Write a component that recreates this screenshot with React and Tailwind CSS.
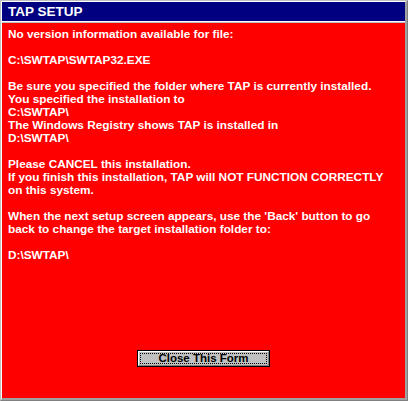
export default function App() {
  const lines = [
    "No version information available for file:",
    "",
    "C:\\SWTAP\\SWTAP32.EXE",
    "",
    "Be sure you specified the folder where TAP is currently installed.",
    "You specified the installation to",
    "C:\\SWTAP\\",
    "The Windows Registry shows TAP is installed in",
    "D:\\SWTAP\\",
    "",
    "Please CANCEL this installation.",
    "If you finish this installation, TAP will NOT FUNCTION CORRECTLY",
    "on this system.",
    "",
    "When the next setup screen appears, use the 'Back' button to go",
    "back to change the target installation folder to:",
    "",
    "D:\\SWTAP\\",
  ];
  return (
    <div className="w-[408px] h-[401px] bg-[#c0c0c0] flex flex-col border-t border-l border-t-[#c0c0c0] border-l-[#c0c0c0] border-r border-b border-r-[#808080] border-b-[#808080] font-['Liberation_Sans',Arial,sans-serif]">
      <div className="flex-1 flex flex-col border-t border-l border-white border-r-2 border-b-2 border-r-[#a0a0a0] border-b-[#a0a0a0]">
        <div className="h-[19px] bg-[#000080] text-white font-bold text-[13.5px] leading-[19px] pl-[6px] shrink-0">
          TAP SETUP
        </div>
        <div className="h-[2px] bg-[#c0c0c0] border-t border-white shrink-0"></div>
        <div className="flex-1 bg-[#ff0000] flex flex-col pl-[6px] pt-[5px]">
          <div className="text-white font-bold text-[11.8px] leading-[13px]">
            {lines.map((l, i) => (
              <div key={i} className="h-[13px] whitespace-pre">{l}</div>
            ))}
          </div>
          <div className="flex justify-center mt-[88px] pr-[6px]">
            <button className="w-[133px] h-[17px] border border-black bg-[#c0c0c0] p-0 flex">
              <div className="flex-1 flex border-t border-l border-white border-r border-b border-r-[#808080] border-b-[#808080] p-[1px]">
                <div className="flex-1 border border-dotted border-black flex items-center justify-center text-black font-bold text-[11.5px] leading-none">
                  Close This Form
                </div>
              </div>
            </button>
          </div>
        </div>
      </div>
    </div>
  );
}
